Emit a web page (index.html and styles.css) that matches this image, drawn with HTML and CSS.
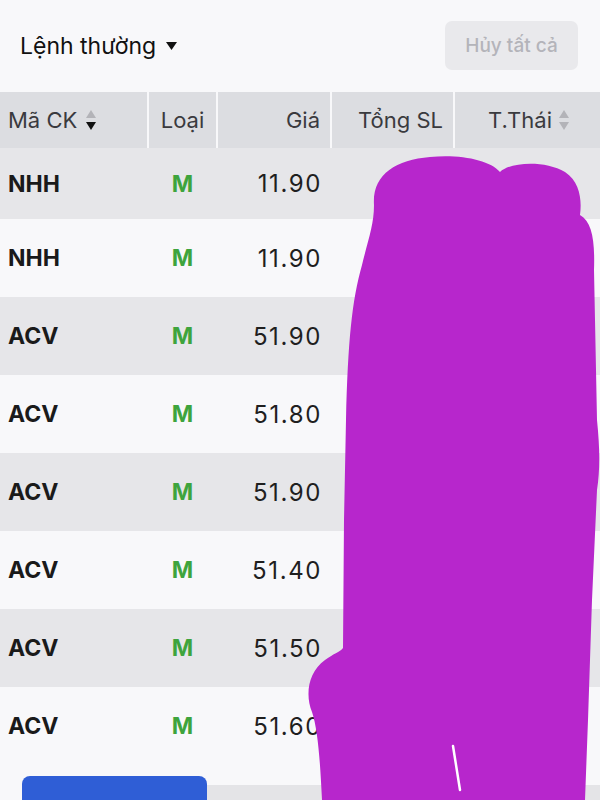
FILE: index.html
```html
<!DOCTYPE html>
<html lang="vi">

<head>
    <meta charset="UTF-8">
    <meta name="viewport" content="width=device-width, initial-scale=1.0">
    <title>Sổ lệnh</title>
    <link rel="stylesheet" href="styles.css">
</head>

<body>
    <div class="toolbar">
        <div class="orderType">
            Lệnh thường
            <svg class="caret" width="11" height="8" viewBox="0 0 11 8"><path d="M0 0h11L5.5 8z" fill="#111" /></svg>
        </div>
        <div class="cancelAll">Hủy tất cả</div>
    </div>

    <div class="head">
        <div class="cell code">Mã CK
            <span class="sort"><i class="up"></i><i class="down on"></i></span>
        </div>
        <div class="cell type">Loại</div>
        <div class="cell num">Giá</div>
        <div class="cell num">Tổng SL</div>
        <div class="cell status">T.Thái
            <span class="sort"><i class="up"></i><i class="down"></i></span>
        </div>
    </div>

    <div class="list">
        <div class="row"><div class="cell code">NHH</div><div class="cell type">M</div><div class="cell num price">11.90</div></div>
        <div class="row"><div class="cell code">NHH</div><div class="cell type">M</div><div class="cell num price">11.90</div></div>
        <div class="row"><div class="cell code">ACV</div><div class="cell type">M</div><div class="cell num price">51.90</div></div>
        <div class="row"><div class="cell code">ACV</div><div class="cell type">M</div><div class="cell num price">51.80</div></div>
        <div class="row"><div class="cell code">ACV</div><div class="cell type">M</div><div class="cell num price">51.90</div></div>
        <div class="row"><div class="cell code">ACV</div><div class="cell type">M</div><div class="cell num price">51.40</div></div>
        <div class="row"><div class="cell code">ACV</div><div class="cell type">M</div><div class="cell num price">51.50</div></div>
        <div class="row"><div class="cell code">ACV</div><div class="cell type">M</div><div class="cell num price">51.60</div></div>
    </div>

    <div class="footer">
        <div class="btn primary"></div>
        <div class="btn plain"></div>
    </div>

    <!-- vệt tô che thông tin -->
    <svg class="scribble" width="600" height="800" viewBox="0 0 600 800">
        <path fill="#b726cc" d="M374 205C372 175 395 160 430 157C460 154 490 160 500 172C510 162 545 160 565 172C580 182 582 200 580 215C592 222 595 240 594 270L597 420C600 450 600 470 597 490L592 600L588 720L585 800L322 800C320 760 318 730 312 712C305 695 308 672 325 660C333 654 340 652 343 648L344 520L346 420C348 340 352 300 362 265C368 240 374 225 374 205Z" />
        <path d="M453 746L460 790" stroke="#fff" stroke-width="2.5" stroke-linecap="round" />
    </svg>
</body>

</html>
```

FILE: styles.css
```css
* {
    padding: 0px;
    margin: 0px;
    box-sizing: border-box;
}

body {
    width: 600px;
    height: 800px;
    overflow: hidden;
    position: relative;
    background-color: #f8f8fa;
    font-family: Inter, "Noto Sans", sans-serif;
    color: #1c1c1e;
}

.toolbar {
    height: 92px;
    display: flex;
    align-items: center;
    justify-content: space-between;
    padding: 0px 22px 0px 20px;
}

.toolbar .orderType {
    display: flex;
    align-items: center;
    gap: 10px;
    font-size: 23px;
    color: #111;
}

.toolbar .cancelAll {
    width: 133px;
    height: 49px;
    margin-top: -2px;
    display: flex;
    align-items: center;
    justify-content: center;
    background-color: #e9e9ec;
    border-radius: 7px;
    color: #b4b4ba;
    font-size: 19px;
    font-weight: 500;
}

.head,
.row {
    display: grid;
    grid-template-columns: 147px 67px 112px 121px 1fr;
    column-gap: 2px;
}

.head {
    height: 56px;
    font-size: 22px;
    color: #3a3a3e;
}

.cell {
    display: flex;
    align-items: center;
}

.head .cell {
    background-color: #dcdde1;
}

.cell.code {
    padding-left: 8px;
}

.cell.type {
    justify-content: center;
}

.cell.num {
    justify-content: flex-end;
    padding-right: 10px;
}

.head .code {
    gap: 9px;
}

.head .status {
    justify-content: center;
    gap: 7px;
    padding-left: 2px;
}

/* mũi tên sắp xếp */
.sort {
    display: flex;
    flex-direction: column;
    gap: 4px;
}

.sort i {
    display: block;
    width: 0px;
    height: 0px;
    border-left: 5px solid transparent;
    border-right: 5px solid transparent;
}

.sort .up {
    border-bottom: 8px solid #b3b3b8;
}

.sort .down {
    border-top: 8px solid #b3b3b8;
}

.sort .down.on {
    border-top-color: #111;
}

.list .row {
    height: 78px;
}

.list .row:first-child {
    height: 71px;
    padding-top: 0px;
}

.list .row:nth-child(odd) {
    background-color: #e6e6e9;
}

.list .row .code {
    font-size: 23px;
    font-weight: 700;
    color: #1a1a1a;
}

.list .row .type {
    font-size: 23px;
    font-weight: 700;
    color: #3ea43d;
}

.list .row .price {
    font-size: 24px;
    color: #1f1f1f;
    letter-spacing: 1.6px;
    padding-right: 8px;
}

.footer {
    display: flex;
    align-items: flex-start;
    padding: 11px 0px 0px 22px;
}

.footer .btn {
    height: 50px;
}

.footer .primary {
    width: 185px;
    background-color: #2f5ed6;
    border-radius: 8px 8px 0px 0px;
}

.footer .plain {
    flex: 1;
    margin-top: 9px;
    background-color: #e4e4e7;
}

.scribble {
    position: absolute;
    left: 0px;
    top: 0px;
    pointer-events: none;
}
```
